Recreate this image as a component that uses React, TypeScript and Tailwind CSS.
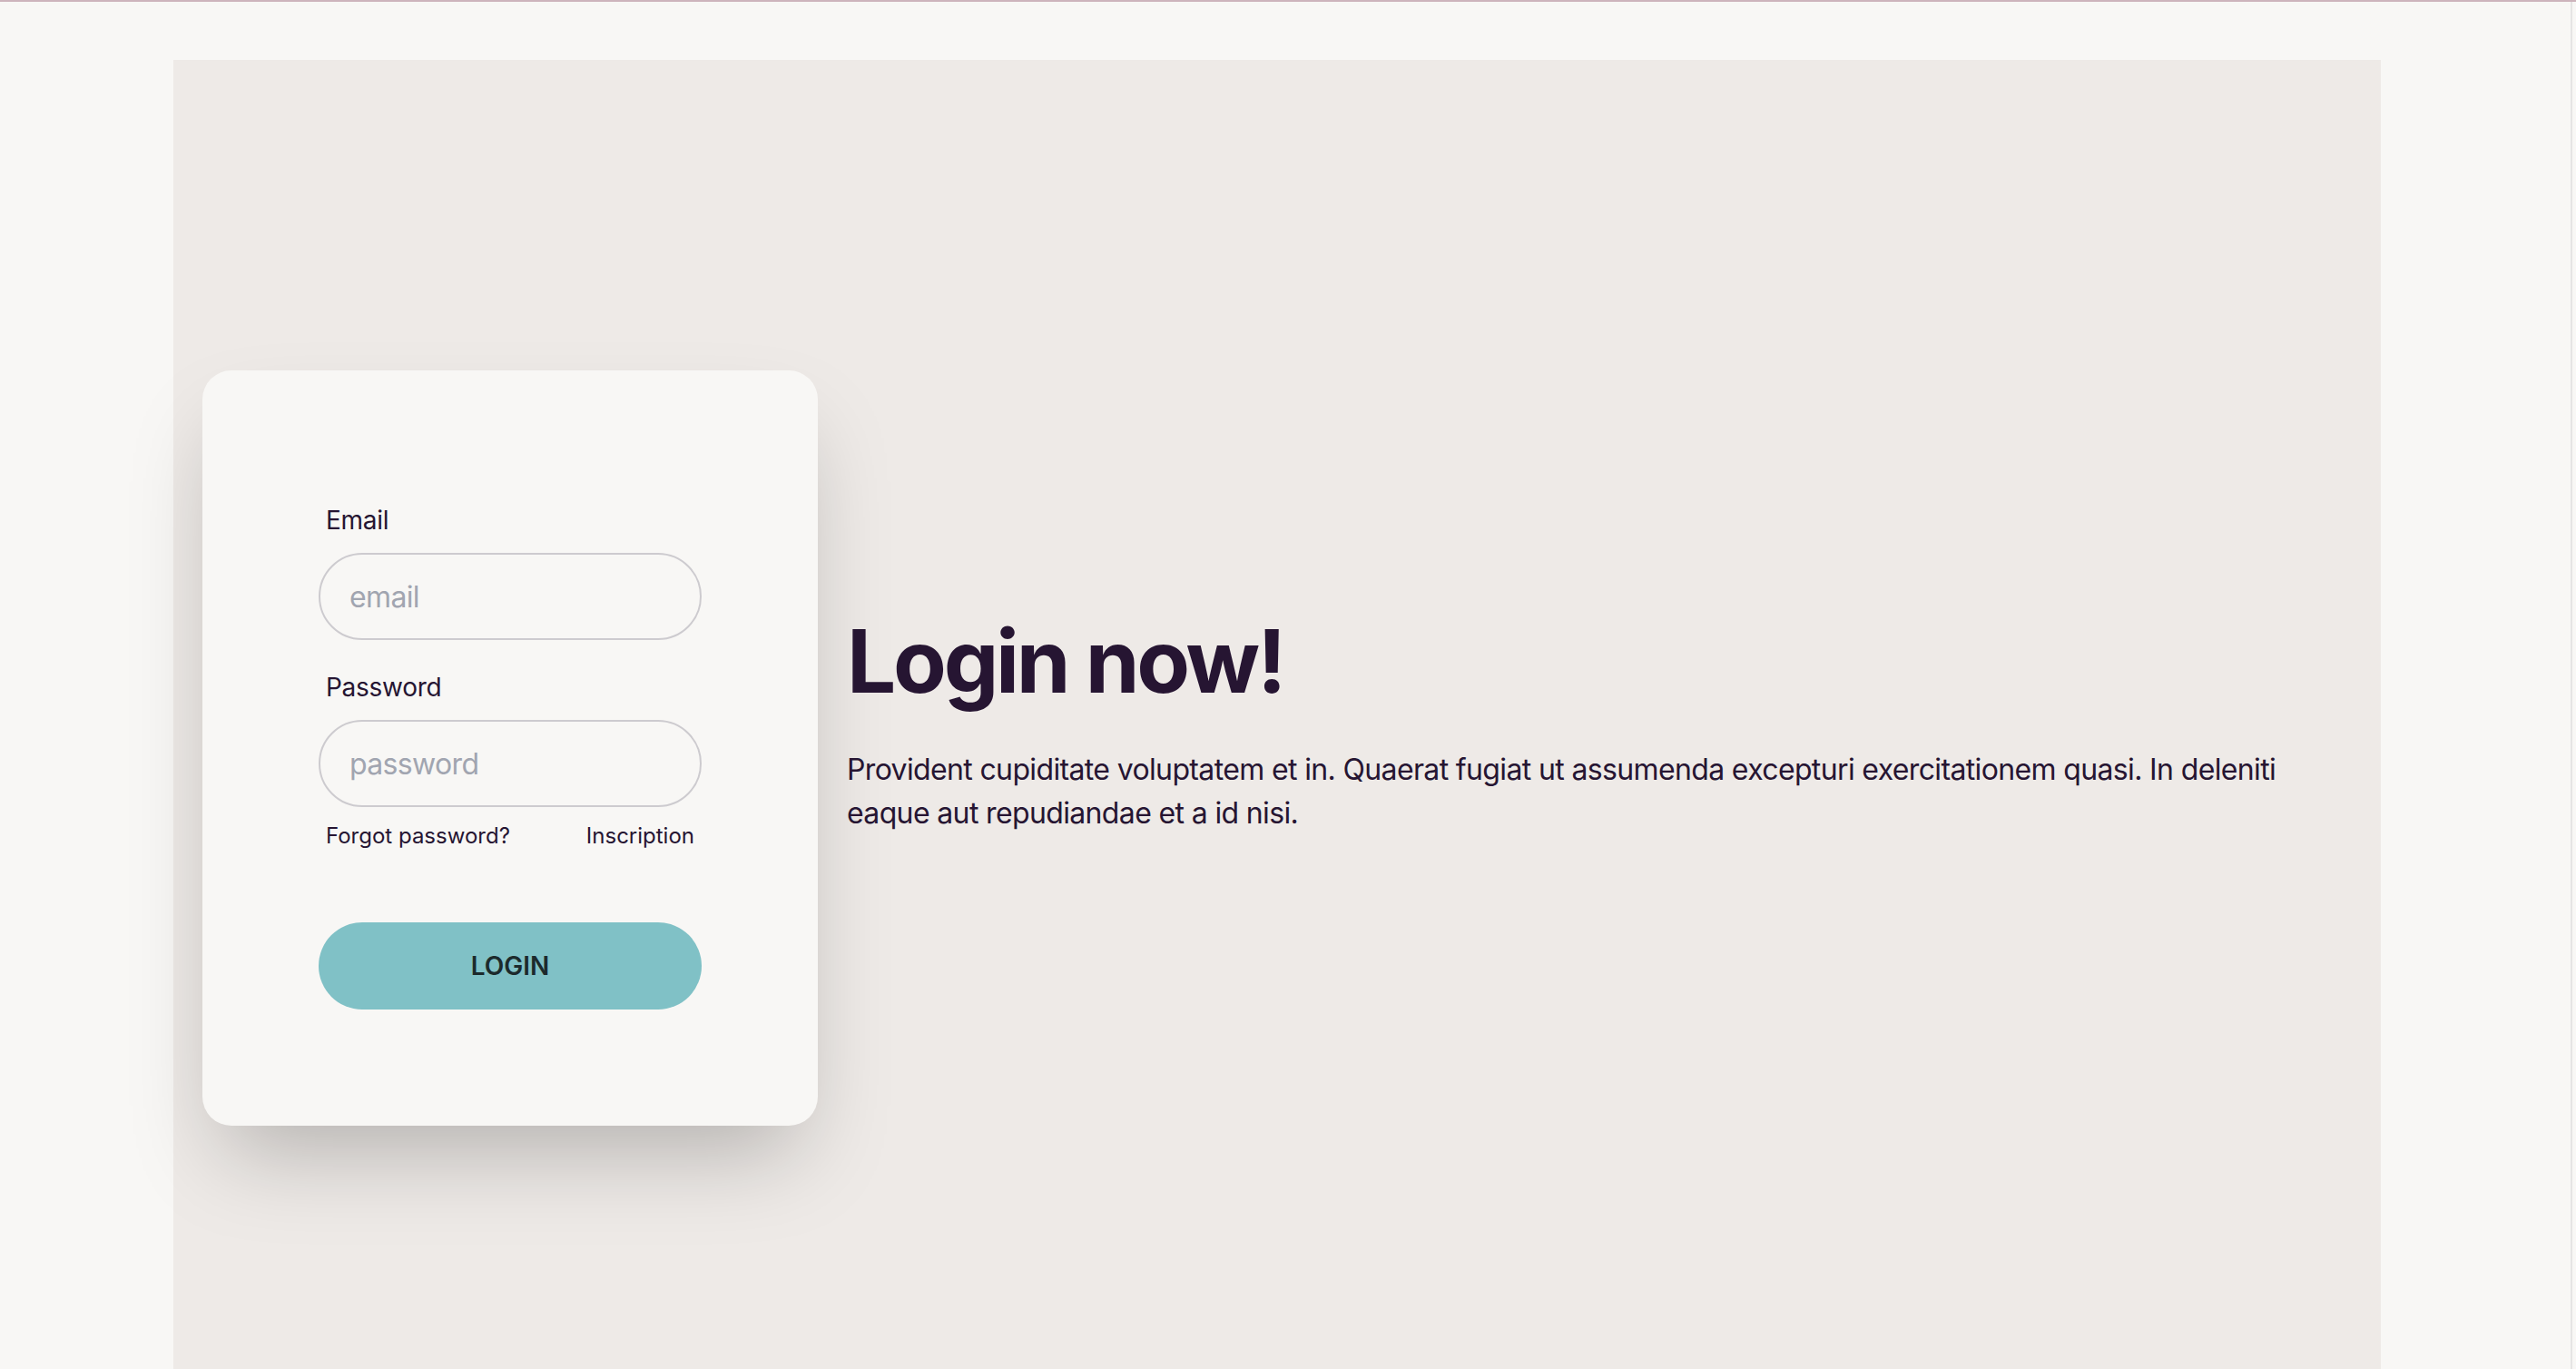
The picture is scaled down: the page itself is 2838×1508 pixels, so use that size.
import React from "react";

function LoginCard() {
  return (
    <form
      onSubmit={(e) => e.preventDefault()}
      className="flex w-[678px] shrink-0 flex-col rounded-[32px] bg-[#f8f7f5] px-[128px] pb-[128px] pt-[145px] shadow-[0_50px_100px_-24px_rgba(0,0,0,0.25)]"
    >
      <label className="px-[8px] text-[28px] leading-[40px] tracking-[-0.01em] text-[#261532]">Email</label>
      <input
        type="email"
        placeholder="email"
        className="mt-[16px] h-[96px] w-full rounded-full border-2 border-[#cdcbcf] bg-transparent px-[32px] text-[32px] tracking-[-0.02em] text-[#261532] outline-none placeholder:text-[#a1a5b0]"
      />
      <label className="mt-[32px] px-[8px] text-[28px] leading-[40px] tracking-[-0.01em] text-[#261532]">
        Password
      </label>
      <input
        type="password"
        placeholder="password"
        className="mt-[16px] h-[96px] w-full rounded-full border-2 border-[#cdcbcf] bg-transparent px-[32px] text-[32px] tracking-[-0.02em] text-[#261532] outline-none placeholder:text-[#a1a5b0]"
      />
      <div className="mt-[16px] flex items-center justify-between px-[8px] text-[24px] leading-[32px] text-[#261532]">
        <a href="#">Forgot password?</a>
        <a href="#">Inscription</a>
      </div>
      <button
        type="submit"
        className="mt-[79px] h-[96px] w-full rounded-full bg-[#80c1c6] text-[28px] font-semibold uppercase text-[#1c2a2c]"
      >
        Login
      </button>
    </form>
  );
}

export default function App() {
  return (
    <div className="flex h-[1508px] overflow-hidden border-t-2 border-[#cdb4bc] bg-[#f8f7f5] font-['Inter',sans-serif]">
      <div className="w-[2832px] shrink-0 pl-[191px] pt-[64px]">
        <div className="flex h-[1516px] w-[2432px] items-center bg-[#eeeae7] px-[32px]">
          <div className="flex w-full items-center gap-[32px]">
            <LoginCard />
            <div className="min-w-0 flex-1 text-[#261532]">
              <h1 className="text-[96px] font-bold leading-none tracking-[-0.034em]">Login now!</h1>
              <p className="py-[48px] text-[32px] leading-[48px] tracking-[-0.02em]">
                Provident cupiditate voluptatem et in. Quaerat fugiat ut assumenda excepturi exercitationem
                quasi. In deleniti eaque aut repudiandae et a id nisi.
              </p>
            </div>
          </div>
        </div>
      </div>
      <div className="w-[2px] shrink-0 bg-[#e5e4e4]" />
      <div className="flex-1" />
    </div>
  );
}
